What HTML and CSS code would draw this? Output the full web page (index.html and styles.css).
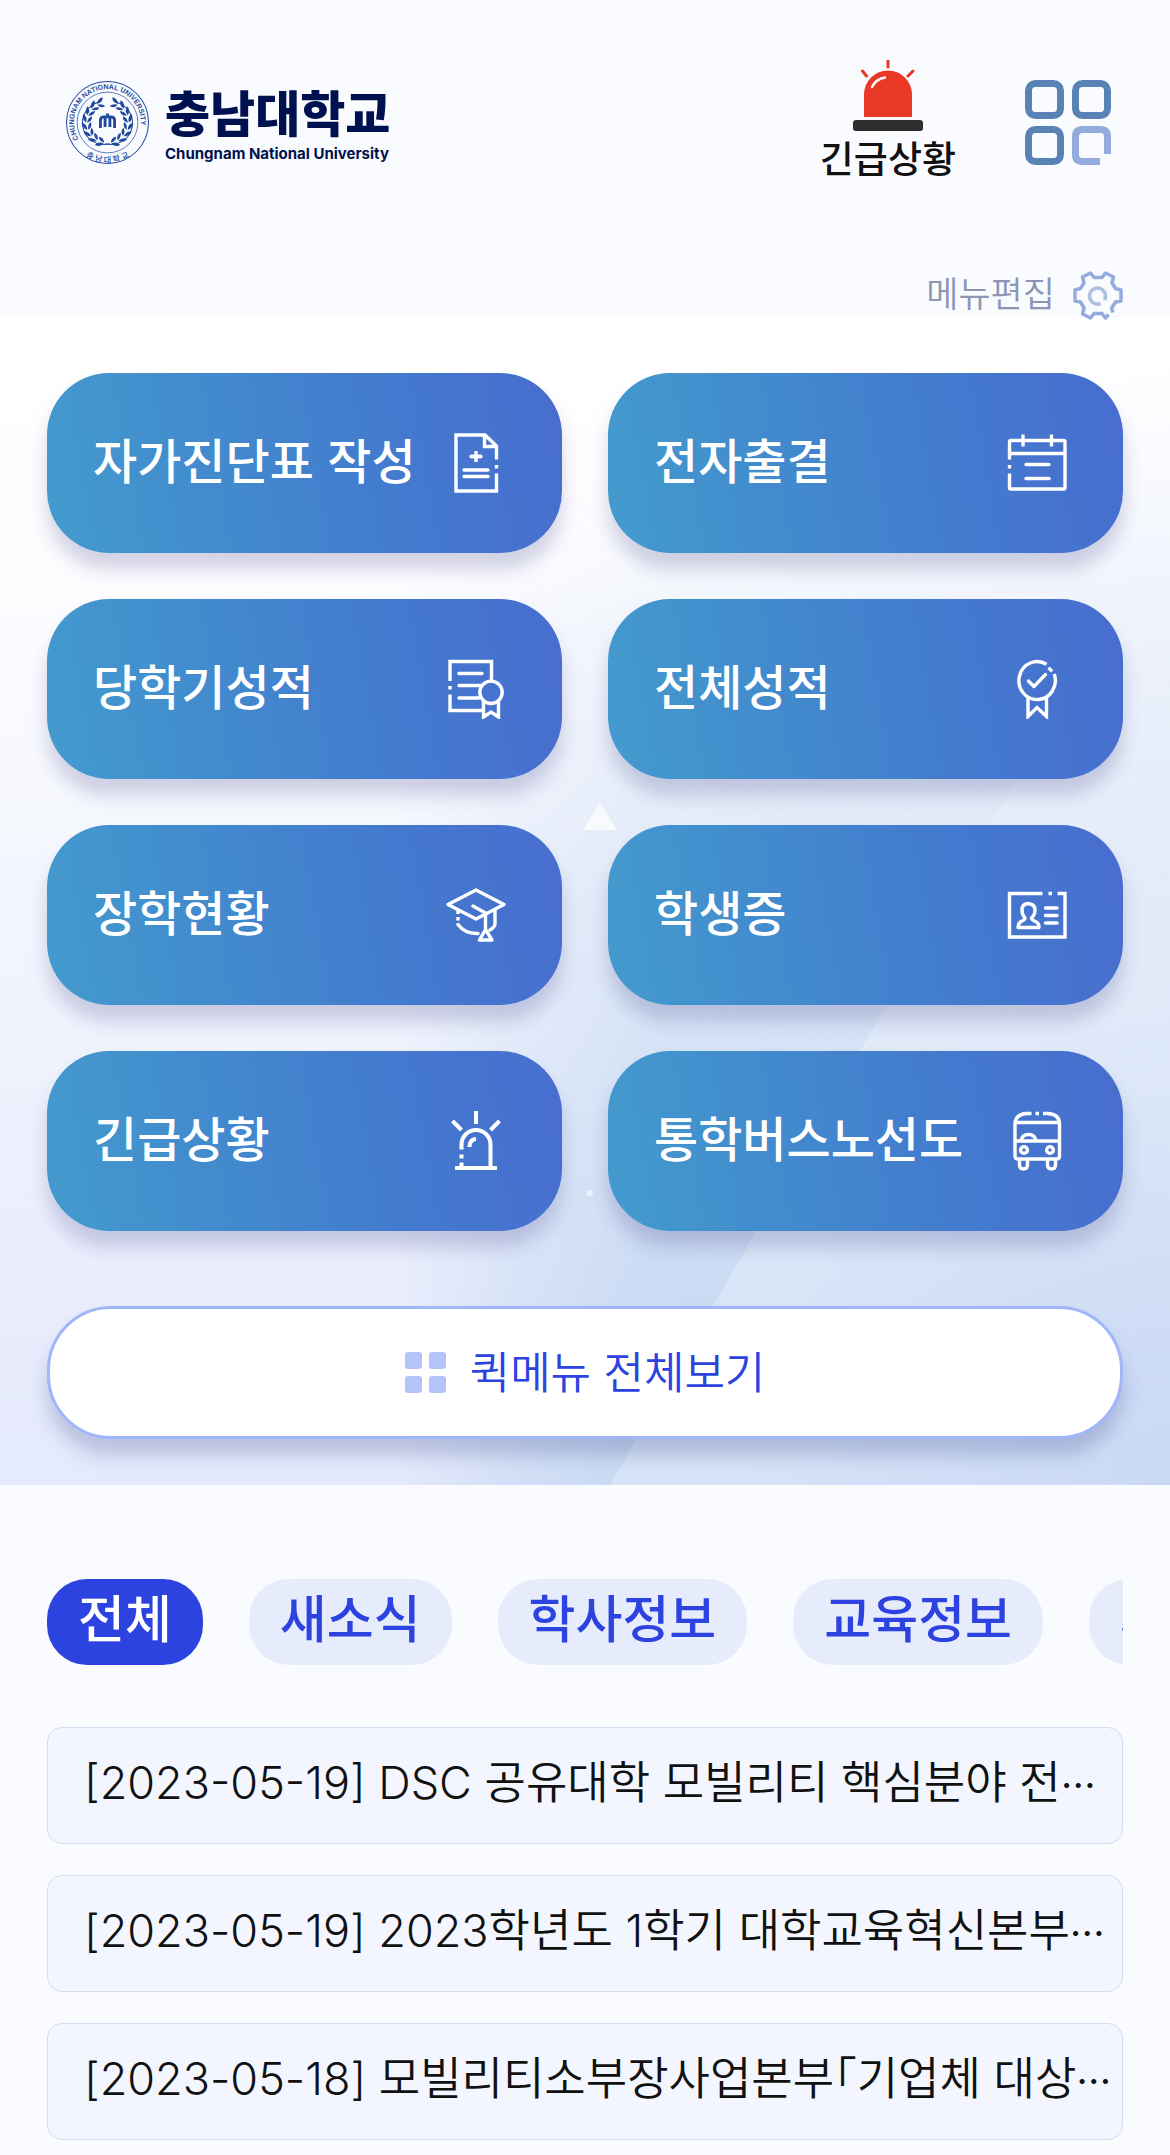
FILE: index.html
```html
<!DOCTYPE html>
<html lang="ko">
<head>
<meta charset="utf-8">
<meta name="viewport" content="width=device-width, initial-scale=1">
<title>충남대학교</title>
<link rel="stylesheet" href="styles.css">
</head>
<body>
<header class="header">
  <a class="logo" href="#">
    <svg class="seal" viewBox="0 0 82 82" aria-hidden="true">
      <defs>
        <path id="ringTop" d="M12.4 57.5A33 33 0 1 1 69.6 57.5"/>
        <path id="ringBottom" d="M12 68A39 39 0 0 0 70 68"/>
        <g id="leaf">
          <path d="M44 20q-3-5-8-4q2 5 8 4z"/>
          <path d="M44 21q-5 0-7 4q5 1 7-4z"/>
        </g>
        <g id="branch">
          <use href="#leaf" transform="rotate(22 41 41)"/>
          <use href="#leaf" transform="rotate(42 41 41)"/>
          <use href="#leaf" transform="rotate(62 41 41)"/>
          <use href="#leaf" transform="rotate(82 41 41)"/>
          <use href="#leaf" transform="rotate(102 41 41)"/>
          <use href="#leaf" transform="rotate(122 41 41)"/>
          <use href="#leaf" transform="rotate(142 41 41)"/>
          <use href="#leaf" transform="rotate(162 41 41)"/>
          <path d="M50 21A21 21 0 0 1 39 62" fill="none" stroke="#1f4a9c" stroke-width="1"/>
        </g>
      </defs>
      <circle cx="41" cy="41" r="40.500" fill="none" stroke="#1f4a9c"/>
      <circle cx="41" cy="41" r="30" fill="none" stroke="#1f4a9c" stroke-width=".7"/>
      <g fill="#1f4a9c">
        <use href="#branch"/>
        <use href="#branch" transform="translate(82 0) scale(-1 1)"/>
        <text class="seal-en"><textPath href="#ringTop">CHUNGNAM NATIONAL UNIVERSITY</textPath></text>
        <text class="seal-ko"><textPath href="#ringBottom" startOffset="50%" text-anchor="middle">충 남 대 학 교</textPath></text>
      </g>
      <path d="M34 46.500V39q0-3.500 3.500-3.500h7q3.500 0 3.500 3.500v7.500M38.600 45.500V36M43.400 45.500V36M41 36v-4" fill="none" stroke="#1f4a9c" stroke-width="2.800"/>
    </svg>
    <span class="logo-text">
      <span class="logo-ko">충남대학교</span>
      <span class="logo-en">Chungnam National University</span>
    </span>
  </a>
  <nav class="header-actions">
    <a class="emergency" href="#">
      <svg class="emergency-icon" viewBox="0 0 70 71" aria-hidden="true">
        <path d="M35 1v6M9.500 11l4 5M60 11l-5 5" stroke="#ea3827" stroke-width="3" stroke-linecap="round"/>
        <path d="M11 57V34.500a24 24 0 0 1 48 0V57z" fill="#ea3827"/>
        <path d="M19 27q4-8 13-9.500" fill="none" stroke="#fff" stroke-width="2.400" stroke-linecap="round"/>
        <rect y="60" width="70" height="11" rx="3" fill="#2d2d2d"/>
      </svg>
      <span>긴급상황</span>
    </a>
    <button class="all-menu" type="button" aria-label="전체메뉴">
      <svg viewBox="0 0 86 86" aria-hidden="true" fill="none" stroke="#5a83b5" stroke-width="7">
        <rect x="3.500" y="3.500" width="32" height="32" rx="7"/>
        <rect x="50.500" y="3.500" width="32" height="32" rx="7"/>
        <rect x="3.500" y="49.500" width="32" height="32" rx="7"/>
        <path d="M82.500 74V56.500q0-7-7-7h-18q-7 0-7 7v18q0 7 7 7H75" stroke="#94abde"/>
      </svg>
    </button>
  </nav>
</header>

<a class="edit" href="#">
  <span>메뉴편집</span>
  <svg class="gear" viewBox="0 0 50 50" aria-hidden="true" fill="none" stroke-width="3.500" stroke-linejoin="round">
    <path d="M35.500 43.500l-3 3.500-3.500-4.500h-8L17.500 47l-8-4 1.500-6-3.500-6L2 30V19l5.500-1.500L11 12 9.500 6l8-4 3.500 4.500h8L32.500 2l8 4L39 12l3.500 5.500L48 19v11l-5.500 1-4 6.500 1.500 4" stroke="#94abde"/>
    <path d="M27.500 32.500A8 8 0 1 1 31.500 29" stroke="#afbfe0"/>
  </svg>
</a>

<main>
<section class="quick">
  <svg class="quick-bg" viewBox="0 0 1170 1168" preserveAspectRatio="none" aria-hidden="true">
    <defs>
      <linearGradient id="fadeX" x1="400" x2="640" y1="0" y2="0" gradientUnits="userSpaceOnUse">
        <stop offset="0" stop-color="#fff" stop-opacity="0"/><stop offset=".5" stop-color="#fff" stop-opacity=".6"/><stop offset="1" stop-color="#fff"/>
      </linearGradient>
      <linearGradient id="blue" x1="740" y1="120" x2="900" y2="1060" gradientUnits="userSpaceOnUse">
        <stop offset="0" stop-color="#c9daf2" stop-opacity="0"/><stop offset="1" stop-color="#c6d8f2"/>
      </linearGradient>
      <linearGradient id="pale" x1="700" y1="1168" x2="900" y2="200" gradientUnits="userSpaceOnUse">
        <stop offset="0" stop-color="#eef2ff" stop-opacity=".4"/><stop offset=".6" stop-color="#fff" stop-opacity=".25"/><stop offset="1" stop-color="#fff" stop-opacity="0"/>
      </linearGradient>
      <radialGradient id="corner" cx="1170" cy="1168" r="420" gradientUnits="userSpaceOnUse">
        <stop offset="0" stop-color="#c4d4f4" stop-opacity=".7"/><stop offset="1" stop-color="#c4d4f4" stop-opacity="0"/>
      </radialGradient>
      <mask id="soft"><rect width="1170" height="1168" fill="url(#fadeX)"/></mask>
    </defs>
    <rect width="1170" height="1168" fill="url(#blue)" mask="url(#soft)"/>
    <path d="M610 1168L1170 196V1168z" fill="url(#pale)"/>
    <rect x="700" y="700" width="470" height="468" fill="url(#corner)"/>
    <path d="M600 486l17 27h-34z" fill="#fff" fill-opacity=".7"/>
    <circle cx="590" cy="876" r="3" fill="#fff" fill-opacity=".6"/>
  </svg>
  <div class="tiles">
    <a class="tile" href="#"><span>자가진단표 작성</span>
      <svg viewBox="0 0 60 60" stroke-width="3.400" aria-hidden="true"><path d="M50.500 26.500V13L39 2H10v56h40.500V40.500M38.500 2v11.500h12M50.500 32v3.500M24.500 23.500h11M30 18v11"/><path class="round" d="M18 37h24M18 43.500h24M25 23.500h10"/></svg></a>
    <a class="tile" href="#"><span>전자출결</span>
      <svg viewBox="0 0 60 60" stroke-width="3.400" aria-hidden="true"><path d="M2.500 26.500V9q0-1.500 1.500-1.500h52.500q1.500 0 1.500 1.500v45.500q0 1.500-1.500 1.500H4q-1.500 0-1.500-1.500V40.500M2.500 32v3.500M2.500 20.500H58M16 1.500v12M44.500 1.500v12"/><path class="round" d="M19 31.500h23M19 45.500h23"/></svg></a>
    <a class="tile" href="#"><span>당학기성적</span>
      <svg viewBox="0 0 60 60" stroke-width="3.400" aria-hidden="true"><path d="M4 22V2.500h41.500V22M4 27v3.500M4 35.500V51.500h33M37.500 42v16l7.500-5 7.500 5V42"/><circle cx="45" cy="33.300" r="11.200"/><path class="round" d="M13 14.500h23M13 26.500h22M13 39h20"/></svg></a>
    <a class="tile" href="#"><span>전체성적</span>
      <svg viewBox="0 0 60 60" stroke-width="3.400" aria-hidden="true"><path d="M39.500 5.300A18.200 19 0 1 0 47.200 15M41.500 8.800l3.600 3.600M21 38v19.500l9-9 9.500 9V38"/><path class="round" d="M21.500 22l5.500 5.500 11.500-12"/></svg></a>
    <a class="tile" href="#"><span>장학현황</span>
      <svg viewBox="0 0 60 60" stroke-width="3.400" aria-hidden="true"><path class="round" d="M30 5l28 14.500L30 34 2 19.500zM27 21l12.500 7v16M39.500 44.500l-6 10.500h12.500zM49 25v14q0 3-5 6M12 39.500q7 9.500 20 9"/><path d="M12 25v4M12 32v3.500"/></svg></a>
    <a class="tile" href="#"><span>학생증</span>
      <svg viewBox="0 0 60 60" stroke-width="3.400" aria-hidden="true"><path d="M35.500 8.500h-33V52H58V8.500h-7.500M41.500 8.500H45"/><path class="round" d="M38.500 23h11.500M38.500 30.500h11.500M38.500 38h11.500M18 33q-3-3-3-8 0-6 6-6.500 7 .5 7 6.500 0 5-3.500 8 0 2 4 3.500 4 2 3.500 6h-21q0-4 3-6 4-1.500 4-3.500z"/></svg></a>
    <a class="tile" href="#"><span>긴급상황</span>
      <svg viewBox="0 0 60 60" stroke-width="4" aria-hidden="true"><path d="M30 0v13M6.500 10l9 9M53.500 10l-9 9M15.500 38.500V33.500a14.500 14.500 0 0 1 29 0V56M15.500 43.500V47.500M15.500 51.500V56M9 57h42M23.500 36q0-7.500 6.500-8"/></svg></a>
    <a class="tile" href="#"><span>통학버스노선도</span>
      <svg viewBox="0 0 60 60" stroke-width="3.400" aria-hidden="true"><path d="M24.500 2.500H20Q8 3 8 13v32q0 3 3 3h38.500q3 0 3-3V13q0-10-12-10.500H36M28.500 2.500h3.500M8 11.500h44.500M8 30h44.500M14 30q1-6.500 7.500-6.500T29 30M12.500 48v6q0 4 4 4t4-4v-6M40.500 48v6q0 4 4 4t4-4v-6"/><circle cx="17" cy="39" r="3.400"/><circle cx="43" cy="39" r="3.400"/></svg></a>
  </div>
  <button class="quick-all" type="button">
    <svg viewBox="0 0 41 41" aria-hidden="true" fill="#b3c4f9"><rect width="17" height="17" rx="3"/><rect x="24" width="17" height="17" rx="3"/><rect y="24" width="17" height="17" rx="3"/><rect x="24" y="24" width="17" height="17" rx="3"/></svg>
    <span>퀵메뉴 전체보기</span>
  </button>
</section>

<section class="news">
  <div class="tabs">
    <button class="tab active" type="button">전체</button>
    <button class="tab" type="button">새소식</button>
    <button class="tab" type="button">학사정보</button>
    <button class="tab" type="button">교육정보</button>
    <button class="tab" type="button">채용정보</button>
  </div>
  <ul class="posts">
    <li><a class="post" href="#">[2023-05-19] DSC 공유대학 모빌리티 핵심분야 전<span class="more">…</span></a></li>
    <li><a class="post" href="#">[2023-05-19] 2023학년도 1학기 대학교육혁신본부<span class="more">…</span></a></li>
    <li><a class="post" href="#">[2023-05-18] 모빌리티소부장사업본부「기업체 대상<span class="more">…</span></a></li>
  </ul>
</section>
</main>
</body>
</html>
```
FILE: styles.css
```css
* { box-sizing: border-box; }
body {
  margin: 0;
  background: #f9fbff;
  color: #111;
  font-family: "Noto Sans CJK KR", sans-serif;
}
a { color: inherit; text-decoration: none; }
button { font: inherit; border: 0; padding: 0; background: none; cursor: pointer; }
svg { display: block; flex: none; }

.header {
  display: flex;
  justify-content: space-between;
  align-items: center;
  padding: 60px 59px 0 66px;
}
.logo { display: flex; align-items: center; gap: 16px; color: #00114f; }
.seal { width: 83px; height: 83px; }
.seal-en { font: bold 7px "Liberation Sans", sans-serif; }
.seal-ko { font-size: 8px; font-weight: 500; }
.logo-text { display: flex; flex-direction: column; gap: 8px; }
.logo-ko { font-size: 49px; font-weight: 900; line-height: 54px; }
.logo-en { font: bold 15px/16px Inter, sans-serif; }
.header-actions { display: flex; align-items: center; gap: 69px; }
.emergency {
  display: flex;
  flex-direction: column;
  align-items: center;
  gap: 6px;
  padding-bottom: 8px;
  font-size: 37px;
  font-weight: 500;
  line-height: 40px;
}
.emergency-icon { width: 70px; height: 71px; }
.all-menu svg { width: 86px; height: 86px; }

.edit {
  display: flex;
  justify-content: flex-end;
  align-items: center;
  gap: 18px;
  height: 48px;
  margin: 87px 47px -3px;
  position: relative;
  z-index: 1;
  color: #8d95b3;
  font-size: 35px;
  font-weight: 350;
  line-height: 40px;
}
.edit span { padding-bottom: 8px; }
.gear { width: 50px; height: 50px; }

.quick {
  position: relative;
  padding: 56px 47px 46px;
  background: linear-gradient(#fff 0%, #fdfdff 20%, #eef2fd 65%, #e4e9fc 100%);
}
.quick-bg { position: absolute; inset: 0; width: 100%; height: 100%; }
.tiles {
  position: relative;
  display: grid;
  grid-template-columns: 1fr 1fr;
  gap: 46px;
}
.tile {
  display: flex;
  justify-content: space-between;
  align-items: center;
  height: 180px;
  padding: 0 56px 0 46px;
  border-radius: 62px;
  background: linear-gradient(80deg, #449bce 0%, #428ccd 30%, #437bce 65%, #486dcf 100%);
  box-shadow: 0 16px 18px rgba(60, 60, 130, .22);
  color: #fff;
  font-size: 48px;
  font-weight: 500;
  line-height: 60px;
  white-space: nowrap;
}
.tile span { padding-bottom: 10px; }
.tile svg { width: 60px; height: 60px; fill: none; stroke: #fff; }
.round { stroke-linecap: round; stroke-linejoin: round; }
.quick-all {
  position: relative;
  display: flex;
  justify-content: center;
  align-items: center;
  gap: 24px;
  width: 100%;
  height: 133px;
  margin-top: 75px;
  border: 3px solid #a0b6fa;
  border-radius: 64px;
  background: #fff;
  box-shadow: 0 16px 18px rgba(60, 70, 140, .25);
  color: #2c43e0;
  font-size: 44px;
  font-weight: 350;
}
.quick-all span { padding-bottom: 6px; }
.quick-all svg { width: 41px; height: 41px; }

.news { padding: 94px 47px 15px; }
.tabs { display: flex; gap: 46px; overflow: hidden; }
.tab {
  flex: none;
  height: 86px;
  padding: 0 31px 12px;
  border-radius: 40px;
  background: #e7ecfd;
  color: #2c43e0;
  font-size: 51px;
  font-weight: 500;
  line-height: 74px;
}
.tab.active { background: #2c43e0; color: #fff; }
.posts {
  display: flex;
  flex-direction: column;
  gap: 31px;
  margin: 62px 0 0;
  padding: 0;
  list-style: none;
}
.post {
  display: block;
  height: 117px;
  padding: 0 0 0 36px;
  border: 1px solid #d5dcf3;
  border-radius: 15px;
  background: #f3f6ff;
  overflow: hidden;
  font-family: Inter, "Noto Sans CJK KR", sans-serif;
  font-size: 45px;
  font-weight: 350;
  font-feature-settings: "halt";
  line-height: 110px;
  white-space: nowrap;
}
.more {
  font-family: "Noto Sans CJK KR", sans-serif;
  font-size: 35px;
  font-weight: 500;
  font-feature-settings: normal;
  line-height: 1;
}
```
